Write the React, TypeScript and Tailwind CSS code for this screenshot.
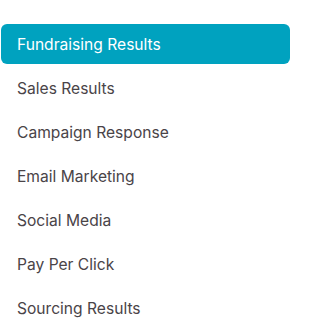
import React from 'react';

const items = [
  'Fundraising Results',
  'Sales Results',
  'Campaign Response',
  'Email Marketing',
  'Social Media',
  'Pay Per Click',
  'Sourcing Results',
];

export default function App() {
  const active = 0;
  return (
    <div className="w-[312px] h-[334px] bg-white pt-[22px] font-['Inter',sans-serif]">
      <ul className="w-[290px]">
        {items.map((label, i) => (
          <li key={label} className="h-[44px] py-[2px] pl-px">
            <a
              href="#"
              className={`flex h-full items-center rounded-md pl-4 pt-px text-[15.6px] ${
                i === active ? 'bg-[#00a2bf] text-white' : 'text-[#4a4448]'
              }`}
            >
              {label}
            </a>
          </li>
        ))}
      </ul>
    </div>
  );
}
